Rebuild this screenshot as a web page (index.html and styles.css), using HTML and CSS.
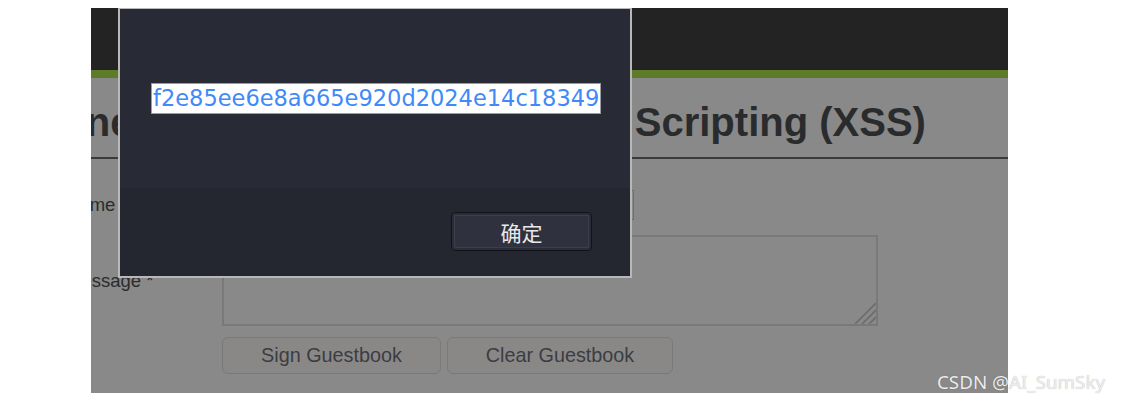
FILE: index.html
```html
<!DOCTYPE html>
<html>
<head>
<meta charset="utf-8">
<link rel="stylesheet" href="styles.css">
</head>
<body>
<div class="page">
  <div class="header"></div>
  <div class="accent"></div>
  <div class="main">
    <h1 class="title">Vulnerability: Stored Cross Site Scripting (XSS)</h1>
    <form class="guest-form">
      <label class="label">Name *</label>
      <div class="field"><input class="name-input" type="text"></div>
      <label class="label">Message *</label>
      <div class="field ta-wrap">
        <textarea class="message"></textarea>
        <svg class="grip" width="22" height="22" viewBox="0 0 22 22"><path d="M22 1 L1 22 M22 8 L8 22 M22 15 L15 22" stroke="#6b6b6b" stroke-width="1.6" fill="none"/></svg>
      </div>
      <div></div>
      <div class="field buttons">
        <button type="button" class="btn btn-sign">Sign Guestbook</button>
        <button type="button" class="btn btn-clear">Clear Guestbook</button>
      </div>
    </form>
  </div>
  <div class="dialog">
    <div class="dialog-body">
      <span class="dialog-text">f2e85ee6e8a665e920d2024e14c18349</span>
    </div>
    <div class="dialog-actions">
      <button type="button" class="ok-btn">确定</button>
    </div>
  </div>
</div>
<div class="watermark">CSDN @AI_SumSky</div>
</body>
</html>
```

FILE: styles.css
```css
html, body {
  margin: 0;
  padding: 0;
  background: #ffffff;
}
body {
  position: relative;
  width: 1122px;
  height: 402px;
  overflow: hidden;
  font-family: "Liberation Sans", Arial, sans-serif;
}
.page {
  position: relative;
  margin: 8px 0 0 91px;
  width: 917px;
  height: 385px;
  background: #888988;
  overflow: hidden;
}
.header {
  height: 62px;
  background: #232323;
}
.accent {
  height: 8px;
  background: #5e7b28;
}
.main {
  margin-left: -66px;
  width: 1000px;
}
.title {
  margin: 22px 0 0 0;
  padding: 0 0 12px 0;
  font-size: 40px;
  line-height: 45px;
  font-weight: bold;
  color: #2a2b2d;
  border-bottom: 2px solid #3b3b3b;
  white-space: nowrap;
}
.guest-form {
  display: grid;
  grid-template-columns: 156px auto;
  align-items: center;
  row-gap: 15px;
  margin: 31px 0 0 41px;
}
.label {
  font-size: 18.5px;
  color: #2c2c2d;
}
.field {
  display: flex;
}
.name-input {
  box-sizing: border-box;
  width: 412px;
  height: 30px;
  margin: 0;
  background: #888988;
  border: 1px solid #6f6f6f;
}
.ta-wrap {
  position: relative;
  width: 656px;
}
.message {
  box-sizing: border-box;
  width: 656px;
  height: 91px;
  margin: 0;
  background: #888988;
  border: 2px solid #7a7878;
  resize: none;
}
.grip {
  position: absolute;
  right: 2px;
  bottom: 2px;
}
.buttons {
  gap: 6px;
  margin-top: -4px;
}
.btn {
  box-sizing: border-box;
  height: 37px;
  margin: 0;
  padding: 0;
  background: #8a8887;
  border: 1px solid #7b7978;
  border-radius: 6px;
  font-family: "Liberation Sans", Arial, sans-serif;
  font-size: 19.8px;
  color: #3a3d43;
}
.btn-sign {
  width: 219px;
}
.btn-clear {
  width: 226px;
}
.dialog {
  position: absolute;
  left: 27px;
  top: 0;
  width: 514px;
  height: 270px;
  box-sizing: border-box;
  border: 2px solid #b8b8b8;
  border-top-width: 1px;
  background: #242630;
  display: flex;
  flex-direction: column;
}
.dialog-body {
  height: 179px;
  box-sizing: border-box;
  padding: 74px 0 0 31px;
  background: #282a36;
}
.dialog-text {
  display: inline-block;
  background: #ffffff;
  border: 1px solid #9c9ca4;
  padding: 0 1px;
  font-family: "DejaVu Sans", sans-serif;
  font-size: 22.5px;
  line-height: 29px;
  color: #4189f8;
}
.dialog-actions {
  flex: 1;
  display: flex;
  justify-content: flex-end;
  align-items: flex-start;
  padding: 24px 38px 0 0;
}
.ok-btn {
  box-sizing: border-box;
  width: 141px;
  height: 39px;
  margin: 0;
  padding: 0;
  background: #2f323e;
  border: 1px solid #121318;
  border-radius: 4px;
  box-shadow: inset 0 0 0 2px #2a2c37, inset 0 0 0 3px #3b3e4c;
  font-family: "Noto Sans CJK SC", sans-serif;
  font-size: 21px;
  color: #e8e8ea;
}
.watermark {
  position: absolute;
  left: 937px;
  top: 369px;
  font-family: "Noto Sans", sans-serif;
  font-size: 18.8px;
  line-height: 27px;
  color: #ececec;
  text-shadow: 0 0 1px rgba(0, 0, 0, 0.3);
  white-space: nowrap;
}
```
